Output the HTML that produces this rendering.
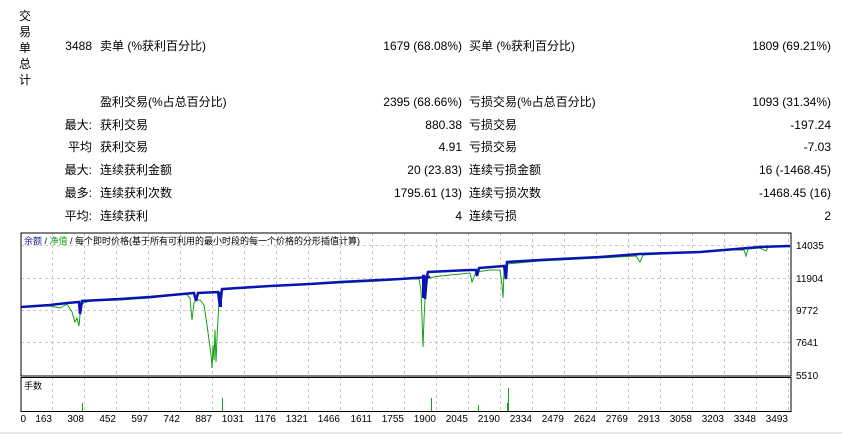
<!DOCTYPE html>
<html><head><meta charset="utf-8">
<style>
body{margin:0;background:#fff;width:842px;height:434px;overflow:hidden;position:relative;font-family:"Liberation Sans","Noto Sans CJK SC",sans-serif;font-size:12px;color:#000}
.t{position:absolute;white-space:nowrap;line-height:14px}
.r{text-align:right}
.v{position:absolute;left:19px;top:8px;width:14px;line-height:16px;font-size:12px}
svg text{font-family:"Liberation Sans","Noto Sans CJK SC",sans-serif}
</style></head><body>
<div class="v">交<br>易<br>单<br>总<br>计</div>

<div class="t r" style="right:750px;top:39px">3488</div>
<div class="t" style="left:100px;top:39px">卖单 (%获利百分比)</div>
<div class="t r" style="right:380px;top:39px">1679 (68.08%)</div>
<div class="t" style="left:469px;top:39px">买单 (%获利百分比)</div>
<div class="t r" style="right:11px;top:39px">1809 (69.21%)</div>

<div class="t" style="left:100px;top:95px">盈利交易(%占总百分比)</div>
<div class="t r" style="right:380px;top:95px">2395 (68.66%)</div>
<div class="t" style="left:469px;top:95px">亏损交易(%占总百分比)</div>
<div class="t r" style="right:11px;top:95px">1093 (31.34%)</div>

<div class="t r" style="right:750px;top:118px">最大:</div>
<div class="t" style="left:100px;top:118px">获利交易</div>
<div class="t r" style="right:380px;top:118px">880.38</div>
<div class="t" style="left:469px;top:118px">亏损交易</div>
<div class="t r" style="right:11px;top:118px">-197.24</div>

<div class="t r" style="right:750px;top:140px">平均</div>
<div class="t" style="left:100px;top:140px">获利交易</div>
<div class="t r" style="right:380px;top:140px">4.91</div>
<div class="t" style="left:469px;top:140px">亏损交易</div>
<div class="t r" style="right:11px;top:140px">-7.03</div>

<div class="t r" style="right:750px;top:163px">最大:</div>
<div class="t" style="left:100px;top:163px">连续获利金额</div>
<div class="t r" style="right:380px;top:163px">20 (23.83)</div>
<div class="t" style="left:469px;top:163px">连续亏损金额</div>
<div class="t r" style="right:11px;top:163px">16 (-1468.45)</div>

<div class="t r" style="right:750px;top:186px">最多:</div>
<div class="t" style="left:100px;top:186px">连续获利次数</div>
<div class="t r" style="right:380px;top:186px">1795.61 (13)</div>
<div class="t" style="left:469px;top:186px">连续亏损次数</div>
<div class="t r" style="right:11px;top:186px">-1468.45 (16)</div>

<div class="t r" style="right:750px;top:209px">平均:</div>
<div class="t" style="left:100px;top:209px">连续获利</div>
<div class="t r" style="right:380px;top:209px">4</div>
<div class="t" style="left:469px;top:209px">连续亏损</div>
<div class="t r" style="right:11px;top:209px">2</div>

<svg width="842" height="434" style="position:absolute;left:0;top:0" xmlns="http://www.w3.org/2000/svg">
<g stroke="#c8c8c8" stroke-dasharray="3,3" stroke-width="1">
<line x1="21" y1="245.5" x2="791" y2="245.5"/>
<line x1="21" y1="278.5" x2="791" y2="278.5"/>
<line x1="21" y1="310.5" x2="791" y2="310.5"/>
<line x1="21" y1="342.5" x2="791" y2="342.5"/>
<g id="vg">
<line x1="52.5" y1="233" x2="52.5" y2="411"/><line x1="84.5" y1="233" x2="84.5" y2="411"/><line x1="116.5" y1="233" x2="116.5" y2="411"/><line x1="148.5" y1="233" x2="148.5" y2="411"/><line x1="180.5" y1="233" x2="180.5" y2="411"/><line x1="212.5" y1="233" x2="212.5" y2="411"/><line x1="244.5" y1="233" x2="244.5" y2="411"/><line x1="276.5" y1="233" x2="276.5" y2="411"/><line x1="308.5" y1="233" x2="308.5" y2="411"/><line x1="340.5" y1="233" x2="340.5" y2="411"/><line x1="372.5" y1="233" x2="372.5" y2="411"/><line x1="404.5" y1="233" x2="404.5" y2="411"/><line x1="436.5" y1="233" x2="436.5" y2="411"/><line x1="468.5" y1="233" x2="468.5" y2="411"/><line x1="500.5" y1="233" x2="500.5" y2="411"/><line x1="532.5" y1="233" x2="532.5" y2="411"/><line x1="564.5" y1="233" x2="564.5" y2="411"/><line x1="596.5" y1="233" x2="596.5" y2="411"/><line x1="628.5" y1="233" x2="628.5" y2="411"/><line x1="660.5" y1="233" x2="660.5" y2="411"/><line x1="692.5" y1="233" x2="692.5" y2="411"/><line x1="724.5" y1="233" x2="724.5" y2="411"/><line x1="756.5" y1="233" x2="756.5" y2="411"/><line x1="788.5" y1="233" x2="788.5" y2="411"/>
</g></g>
<rect x="21" y="376" width="770" height="1.5" fill="#fff"/>
<polyline fill="none" stroke="#14a014" stroke-width="1" points="21,307 50,306 60,308 67,304 72,312 75,322 77,318 79,326 81,304 90,301 120,300 150,298 186,294 190,298 192,320 194,303 196,300 200,300 204,305 207,325 209,340 211,355 212,368 213,345 214,360 215,330 216,362 217,338 218,320 219,300 221,290 260,287 300,285 340,283 380,281 410,279 419,279 421,290 422,318 423,347 424,320 425,300 426,283 428,278 440,276 470,273 472,282 474,277 476,272 490,270 500,270 502,285 503,298 504,272 506,264 540,261 600,258 636,256 640,262 643,255 700,252 730,250 744,250 746,256 748,249 760,248 766,251 768,247 790,246"/>
<polyline fill="none" stroke="#0a14b4" stroke-width="2.5" points="21,307 50,305 67,303 79,302 80,314 82,301 120,299 150,297 194,293 196,301 198,293 218,292 220,307 222,289 270,286 310,284 340,282 380,280 400,279 430,277"/>
<polyline fill="none" stroke="#0a14b4" stroke-width="2.5" points="422,276 424,276 425,299 427,276 428,272 470,270 476,270 477,276 479,268 504,266 506,279 507,262 540,260 600,257 640,254 700,252 760,247 790,246"/>
<rect x="422" y="278" width="4" height="20" fill="#0a14b4"/>
<rect x="219" y="292" width="3" height="15" fill="#0a14b4"/>
<g stroke="#14a014" stroke-width="1">
<line x1="82.5" y1="403" x2="82.5" y2="411"/><line x1="222.5" y1="398" x2="222.5" y2="411"/><line x1="431.5" y1="398" x2="431.5" y2="411"/><line x1="478.5" y1="405" x2="478.5" y2="411"/><line x1="508.5" y1="388" x2="508.5" y2="411"/><line x1="507.5" y1="403" x2="507.5" y2="411"/>
</g>
<rect x="21" y="233" width="770" height="143" fill="none" stroke="#000" stroke-width="1"/>
<rect x="21" y="377.5" width="770" height="34" fill="none" stroke="#000" stroke-width="1"/>
<line x1="0" y1="433" x2="842" y2="433" stroke="#d0d0d0"/>
<text x="24" y="244" font-size="9"><tspan fill="#1a1aa0">余额</tspan><tspan fill="#000"> / </tspan><tspan fill="#14a014">净值</tspan><tspan fill="#000"> / 每个即时价格(基于所有可利用的最小时段的每一个价格的分形插值计算)</tspan></text>
<text x="24" y="389" font-size="9">手数</text>
<g font-size="10" fill="#000">
<text x="796" y="249">14035</text><text x="796" y="282">11904</text><text x="796" y="314">9772</text><text x="796" y="346">7641</text><text x="796" y="379">5510</text>
</g>
<g font-size="10" fill="#000" text-anchor="end">
<text x="26" y="422">0</text><text x="52" y="422">163</text><text x="84" y="422">308</text><text x="116" y="422">452</text><text x="148" y="422">597</text><text x="180" y="422">742</text><text x="212" y="422">887</text><text x="244" y="422">1031</text><text x="276" y="422">1176</text><text x="308" y="422">1321</text><text x="340" y="422">1466</text><text x="372" y="422">1611</text><text x="404" y="422">1755</text><text x="436" y="422">1900</text><text x="468" y="422">2045</text><text x="500" y="422">2190</text><text x="532" y="422">2334</text><text x="564" y="422">2479</text><text x="596" y="422">2624</text><text x="628" y="422">2769</text><text x="660" y="422">2913</text><text x="692" y="422">3058</text><text x="724" y="422">3203</text><text x="756" y="422">3348</text><text x="788" y="422">3493</text>
</g>
</svg>
</body></html>
